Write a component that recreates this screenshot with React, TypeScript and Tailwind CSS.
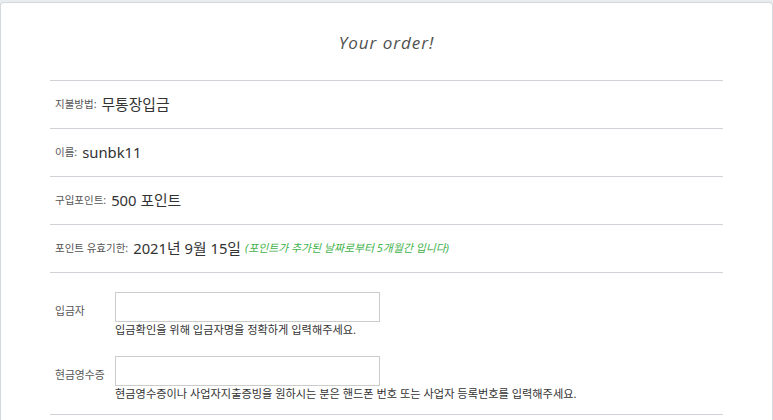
import React from "react";

const kr = { fontFamily: '"Noto Sans", "Noto Sans CJK KR", sans-serif' };

function Row({ label, children }: { label: string; children: React.ReactNode }) {
  return (
    <div className="flex h-[48px] items-center border-t border-[#cfd3d7] pl-[5px]" style={kr}>
      <span className="text-[10.5px] text-[#555]">{label}:</span>
      <span className="ml-[5px] flex items-center text-[14.8px] text-[#333]">{children}</span>
    </div>
  );
}

function Field({ label, help }: { label: string; help: string }) {
  return (
    <div className="flex" style={kr}>
      <div className="w-[65px] pl-[5px] pt-[12px] text-[10.8px] leading-[14px] text-[#555]">{label}</div>
      <div className="flex flex-col">
        <input className="h-[30px] w-[265px] border border-[#cccccc] bg-white outline-none" />
        <div className="mt-[1px] text-[11.2px] leading-[14px] text-[#333]">{help}</div>
      </div>
    </div>
  );
}

export default function App() {
  return (
    <div className="min-h-[420px] bg-[#e9edf0] pt-[2px]">
      <div className="h-[418px] rounded-t-[4px] border border-b-0 border-[#d3d8dc] bg-white px-[49px] pt-[28px]">
        <div
          className="h-[24px] text-center text-[17px] leading-[24px] tracking-[1px] text-[#505050]"
          style={{ fontFamily: '"Open Sans", sans-serif', fontStyle: "italic", fontWeight: 400 }}
        >
          Your order!
        </div>
        <div className="mt-[25px]">
          <Row label="지불방법">무통장입금</Row>
          <Row label="이름">sunbk11</Row>
          <Row label="구입포인트">500 포인트</Row>
          <Row label="포인트 유효기한">
            2021년 9월 15일
            <span className="ml-[4px] text-[10.9px] italic text-[#3fb24a]">(포인트가 추가된 날짜로부터 5개월간 입니다)</span>
          </Row>
          <div className="flex flex-col gap-[19px] border-t border-b border-[#cfd3d7] pt-[19px] pb-[13px]">
            <Field label="입금자" help="입금확인을 위해 입금자명을 정확하게 입력해주세요." />
            <Field
              label="현금영수증"
              help="현금영수증이나 사업자지출증빙을 원하시는 분은 핸드폰 번호 또는 사업자 등록번호를 입력해주세요."
            />
          </div>
        </div>
      </div>
    </div>
  );
}
